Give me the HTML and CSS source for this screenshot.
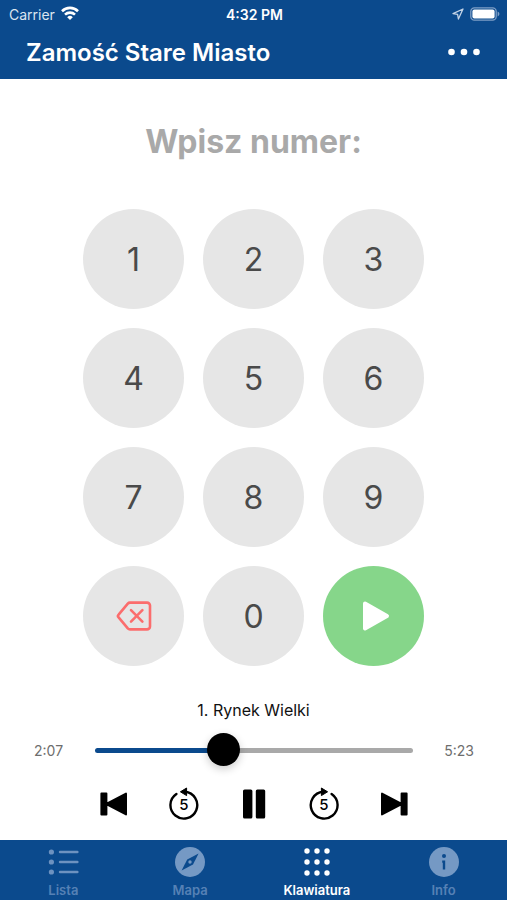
FILE: index.html
```html
<!DOCTYPE html>
<html lang="pl">
<head>
    <meta charset="utf-8">
    <meta name="viewport" content="width=device-width, initial-scale=1">
    <title>Zamość Stare Miasto</title>
    <link rel="stylesheet" href="styles.css">
</head>
<body>

    <header class="header">
        <div class="status">
            <div class="status-left">
                <span>Carrier</span>
                <svg width="18" height="16" viewBox="0 0 18 16" fill="none" stroke="#fff" stroke-width="2.6">
                    <path d="M1 5.2a11.4 11.4 0 0 1 16 0M4 8.6a7.2 7.2 0 0 1 10 0"/>
                    <path d="M9 14L6.2 11.2a4 4 0 0 1 5.6 0z" fill="#fff" stroke="none"/>
                </svg>
            </div>
            <span class="clock">4:32 PM</span>
            <div class="status-right">
                <svg width="12" height="12" viewBox="0 0 12 12" fill="none" stroke="#c3d3e6" stroke-width="1.3" stroke-linejoin="round">
                    <path d="M11 1L1 5.6l4.6.8L6.4 11z"/>
                </svg>
                <svg width="30" height="14" viewBox="0 0 30 14">
                    <rect x=".8" y=".8" width="25.4" height="12.4" rx="3.6" fill="none" stroke="#7f9fc6" stroke-width="1.3"/>
                    <rect x="2.4" y="2.4" width="22.2" height="9.2" rx="2" fill="#fff"/>
                    <path d="M27.6 4.6c2.4.8 2.4 4 0 4.8z" fill="#7f9fc6"/>
                </svg>
            </div>
        </div>
        <div class="title-bar">
            <h1>Zamość Stare Miasto</h1>
            <button class="more" type="button" aria-label="Więcej">
                <svg width="32" height="8" viewBox="0 0 32 8" fill="#fff">
                    <circle cx="3.5" cy="4" r="3.3"/>
                    <circle cx="16" cy="4" r="3.3"/>
                    <circle cx="28.5" cy="4" r="3.3"/>
                </svg>
            </button>
        </div>
    </header>

    <main class="main">
        <h2>Wpisz numer:</h2>

        <div class="keypad">
            <button class="key" type="button">1</button>
            <button class="key" type="button">2</button>
            <button class="key" type="button">3</button>
            <button class="key" type="button">4</button>
            <button class="key" type="button">5</button>
            <button class="key" type="button">6</button>
            <button class="key" type="button">7</button>
            <button class="key" type="button">8</button>
            <button class="key" type="button">9</button>
            <button class="key" type="button" aria-label="Usuń">
                <svg width="36" height="32" viewBox="0 0 36 32" fill="none" stroke="#fb6d6d" stroke-width="2.6" stroke-linecap="round" stroke-linejoin="round">
                    <path d="M14 2.6h17a3 3 0 0 1 3 3v20.8a3 3 0 0 1-3 3H14a3 3 0 0 1-2.2-1L2.6 17.4a2 2 0 0 1 0-2.8L11.8 3.6a3 3 0 0 1 2.2-1z"/>
                    <path d="M15 10.2l11.4 11.4M26.4 10.2L15 21.6"/>
                </svg>
            </button>
            <button class="key" type="button">0</button>
            <button class="key key-play" type="button" aria-label="Odtwórz">
                <svg width="32" height="32" viewBox="0 0 32 32" fill="#fff" stroke="#fff" stroke-width="4" stroke-linejoin="round">
                    <path d="M7 3.6L29 16 7 28.4z"/>
                </svg>
            </button>
        </div>

        <section class="player">
            <label class="track" for="seek">1. Rynek Wielki</label>
            <div class="progress">
                <span class="time">2:07</span>
                <input class="seek" id="seek" type="range" min="0" max="323" value="127">
                <span class="time time-end">5:23</span>
            </div>
            <div class="controls">
                <button type="button" aria-label="Poprzedni">
                    <svg width="32" height="32" viewBox="0 0 32 32" stroke="#000" stroke-width="2" stroke-linejoin="round">
                        <path d="M3.4 5.4h5v21.2h-5zM8.4 16L28 5.6v20.8z"/>
                    </svg>
                </button>
                <button type="button" aria-label="Cofnij 5 sekund">
                    <svg width="32" height="34" viewBox="0 0 32 34">
                        <path d="M8.4 7A13.4 13.4 0 1 0 17 4.8" fill="none" stroke="#000" stroke-width="2.4" stroke-linecap="round"/>
                        <path d="M12.4 4.8L18.6 1v7.6z" stroke="#000" stroke-linejoin="round"/>
                        <text class="skip" x="16" y="23" text-anchor="middle">5</text>
                    </svg>
                </button>
                <button type="button" aria-label="Pauza">
                    <svg width="32" height="32" viewBox="0 0 32 32">
                        <rect x="5" y="1.4" width="9.4" height="29.2" rx="1.6"/>
                        <rect x="17.8" y="1.4" width="9.4" height="29.2" rx="1.6"/>
                    </svg>
                </button>
                <button type="button" aria-label="Dalej 5 sekund">
                    <svg width="32" height="34" viewBox="0 0 32 34">
                        <path d="M23.6 7A13.4 13.4 0 1 1 15 4.8" fill="none" stroke="#000" stroke-width="2.4" stroke-linecap="round"/>
                        <path d="M19.6 4.8L13.4 1v7.6z" stroke="#000" stroke-linejoin="round"/>
                        <text class="skip" x="16" y="23" text-anchor="middle">5</text>
                    </svg>
                </button>
                <button type="button" aria-label="Następny">
                    <svg width="32" height="32" viewBox="0 0 32 32" stroke="#000" stroke-width="2" stroke-linejoin="round">
                        <path d="M23.6 5.4h5v21.2h-5zM23.6 16L4 5.6v20.8z"/>
                    </svg>
                </button>
            </div>
        </section>
    </main>

    <nav class="tabs">
        <a href="#lista">
            <svg width="32" height="32" viewBox="0 0 32 32" fill="#6d92c0">
                <circle cx="4.4" cy="6" r="2.6"/>
                <circle cx="4.4" cy="16" r="2.6"/>
                <circle cx="4.4" cy="26" r="2.6"/>
                <path d="M13 6h17.4M13 16h17.4M13 26h17.4" stroke="#6d92c0" stroke-width="2.4" stroke-linecap="round"/>
            </svg>
            <span>Lista</span>
        </a>
        <a href="#mapa">
            <svg width="32" height="32" viewBox="0 0 32 32">
                <circle cx="16" cy="16" r="15" fill="#7599c4"/>
                <path d="M24.6 7.6L19 18.6 7.6 24.6 13.2 13.4z" fill="#0b4a8d"/>
                <circle cx="16" cy="16" r="1.7" fill="#7599c4"/>
            </svg>
            <span>Mapa</span>
        </a>
        <a class="active" href="#klawiatura">
            <svg width="32" height="32" viewBox="0 0 32 32" fill="#fff">
                <circle cx="6" cy="5" r="2.7"/>
                <circle cx="16" cy="5" r="2.7"/>
                <circle cx="26" cy="5" r="2.7"/>
                <circle cx="6" cy="16" r="2.7"/>
                <circle cx="16" cy="16" r="2.7"/>
                <circle cx="26" cy="16" r="2.7"/>
                <circle cx="6" cy="27" r="2.7"/>
                <circle cx="16" cy="27" r="2.7"/>
                <circle cx="26" cy="27" r="2.7"/>
            </svg>
            <span>Klawiatura</span>
        </a>
        <a href="#info">
            <svg width="32" height="32" viewBox="0 0 32 32">
                <circle cx="16" cy="16" r="15" fill="#7599c4"/>
                <circle cx="16" cy="10" r="2" fill="#0b4a8d"/>
                <path d="M14.2 15.6H16V23.6" fill="none" stroke="#0b4a8d" stroke-width="2.4"/>
            </svg>
            <span>Info</span>
        </a>
    </nav>

</body>
</html>
```
FILE: styles.css
```css
* {
    box-sizing: border-box;
}
body {
    margin: 0;
    min-height: 100vh;
    display: flex;
    flex-direction: column;
    font-family: Inter, "Liberation Sans", sans-serif;
    background-color: #fff;
}
button {
    padding: 0;
    border: 0;
    background: none;
    font-family: inherit;
    cursor: pointer;
}
svg {
    display: block;
}

/* Header */
.header {
    background-color: #0b4a8d;
    color: #fff;
}
.status {
    display: grid;
    grid-template-columns: 1fr auto 1fr;
    align-items: center;
    height: 28px;
    padding: 0 7px 0 9px;
    font-size: 14px;
}
.status-left,
.status-right {
    display: flex;
    align-items: center;
    gap: 6px;
    color: #dbe5f0;
}
.status-right {
    justify-content: flex-end;
}
.clock {
    font-weight: 600;
}
.title-bar {
    display: flex;
    align-items: center;
    justify-content: space-between;
    height: 51px;
    padding: 0 27px 3px 26px;
}
.title-bar h1 {
    margin: 0;
    font-size: 24px;
    font-weight: 600;
}

/* Keypad */
.main {
    flex: 1;
    display: flex;
    flex-direction: column;
    align-items: center;
}
.main h2 {
    margin: 43px 0 47px;
    font-size: 32px;
    line-height: 40px;
    font-weight: 700;
    color: #a9a9a9;
}
.keypad {
    display: grid;
    grid-template-columns: repeat(3, 101px);
    grid-auto-rows: 100px;
    gap: 19px;
}
.key {
    display: flex;
    align-items: center;
    justify-content: center;
    border-radius: 50%;
    background-color: #e6e6e6;
    color: #4a4a4a;
    font-size: 32px;
    font-weight: 400;
}
.key-play {
    background-color: #86d68a;
}

/* Player */
.player {
    width: 100%;
    margin-top: 34px;
    text-align: center;
}
.track {
    display: block;
    font-size: 16px;
    line-height: 20px;
    color: #111;
}
.progress {
    display: flex;
    align-items: center;
    height: 40px;
    margin-top: 10px;
    padding: 0 33px 0 34px;
}
.time {
    width: 61px;
    font-size: 14px;
    text-align: left;
    color: #6e6e6e;
}
.time-end {
    text-align: right;
}
.seek {
    flex: 1;
    min-width: 0;
    height: 34px;
    margin: 0;
    -webkit-appearance: none;
    appearance: none;
    background: none;
}
.seek::-webkit-slider-runnable-track {
    height: 5px;
    border-radius: 3px;
    background: linear-gradient(to right, #0b4a8d 40%, #a9a9a9 40%);
}
.seek::-webkit-slider-thumb {
    -webkit-appearance: none;
    width: 33px;
    height: 33px;
    margin-top: -15px;
    border-radius: 50%;
    background-color: #000;
    box-shadow: 0 3px 8px rgba(0, 0, 0, 0.2);
}
.controls {
    display: flex;
    align-items: center;
    justify-content: center;
    gap: 38px;
    height: 34px;
    margin: 17px 0 18px;
}
.skip {
    font-size: 15px;
    font-weight: 500;
}

/* Tab bar */
.tabs {
    display: grid;
    grid-template-columns: repeat(4, 1fr);
    height: 60px;
    padding-top: 6px;
    background-color: #0b4a8d;
}
.tabs a {
    display: flex;
    flex-direction: column;
    align-items: center;
    gap: 4px;
    color: #5681b5;
    font-size: 13px;
    font-weight: 600;
    line-height: 16px;
    text-decoration: none;
}
.tabs .active {
    color: #fff;
}
```
